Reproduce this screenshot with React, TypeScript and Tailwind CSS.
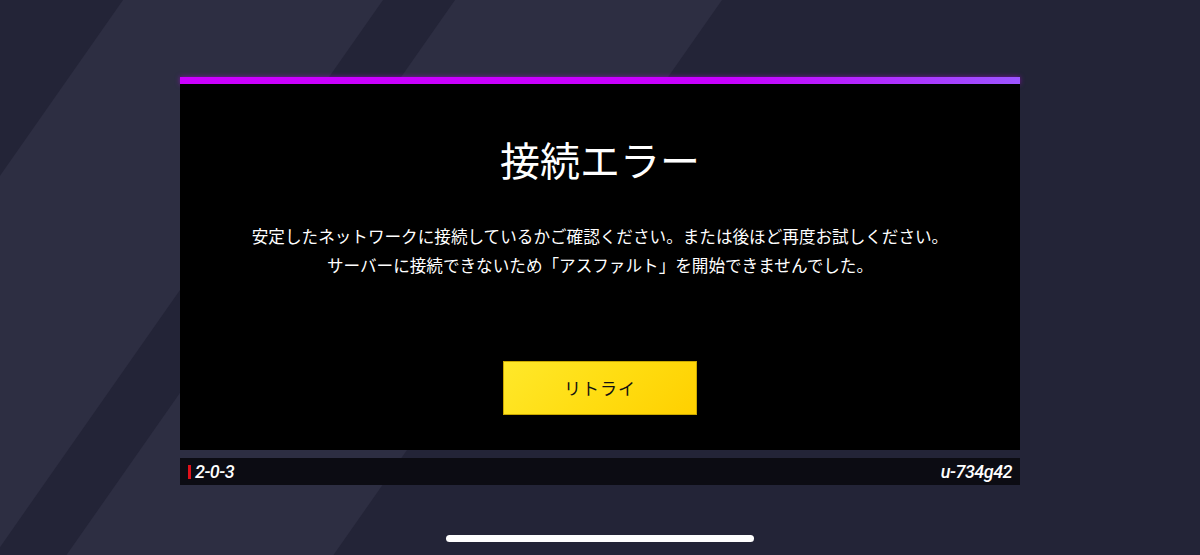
import React from "react";

export default function App() {
  const jp = { fontFamily: '"Noto Sans CJK JP", "Noto Sans", sans-serif' };
  const code = { fontFamily: 'Roboto, "Liberation Sans", sans-serif' };
  return (
    <div className="relative w-[1200px] h-[555px] overflow-hidden bg-[#232437]">
      <svg
        className="absolute inset-0 w-[1200px] h-[555px]"
        viewBox="0 0 1200 555"
        aria-hidden="true"
      >
        <polygon points="123,0 383,0 -5.5,555 -265.5,555" fill="#2d2e42" />
        <polygon points="455,0 722,0 333.5,555 66.5,555" fill="#2d2e42" />
      </svg>

      <div className="relative flex flex-col items-center">
        <div className="mt-[77px] w-[840px] flex flex-col">
          <div className="h-[7px] bg-[linear-gradient(90deg,#cc00ff_0%,#c800ff_65%,#9c55ff_100%)] shadow-[0_0_5px_rgba(204,0,255,0.5)]" />
          <div className="h-[366px] bg-black flex flex-col items-center" style={jp}>
            <h1 className="mt-[51px] text-[40px] leading-[48px] text-white font-normal">
              接続エラー
            </h1>
            <div className="mt-[39px] text-[16.6px] leading-[29px] text-white text-center">
              <p>安定したネットワークに接続しているかご確認ください。または後ほど再度お試しください。</p>
              <p>サーバーに接続できないため「アスファルト」を開始できませんでした。</p>
            </div>
            <button className="mt-[81px] w-[194px] h-[54px] bg-[linear-gradient(135deg,#ffe82a_0%,#ffdc10_55%,#ffd000_100%)] border border-[#caa800] flex items-center justify-center text-[17px] text-[#111] tracking-[1px]">
              リトライ
            </button>
          </div>
          <div className="mt-[8px] h-[27px] bg-[#0c0c13] flex items-center justify-between pl-[8px] pr-[8px]" style={code}>
            <div className="flex items-center gap-[4px]">
              <span className="w-[3px] h-[14px] bg-[#e0101a]" />
              <span className="text-[18px] italic font-medium text-white leading-none tracking-[-0.5px]">2-0-3</span>
            </div>
            <span className="text-[18px] italic font-medium text-white leading-none tracking-[-0.5px]">u-734g42</span>
          </div>
        </div>
        <div className="mt-[50px] w-[308px] h-[7px] rounded-full bg-white" />
      </div>
    </div>
  );
}
